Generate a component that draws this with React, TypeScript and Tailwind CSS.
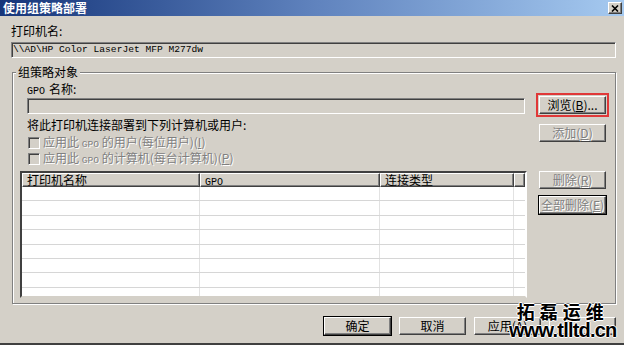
import clsx from 'clsx';
import type { ReactNode } from 'react';

const cjk = "font-['Noto_Sans_CJK_SC',sans-serif]";
const mono = "font-['Liberation_Mono',monospace]";

const raised =
  'border border-t-white border-l-white border-r-[#404040] border-b-[#404040] shadow-[inset_-1px_-1px_0_#808080]';
const sunken =
  'border border-t-[#808080] border-l-[#808080] border-r-white border-b-white shadow-[inset_1px_1px_0_#404040]';
const grayText = 'text-[#808080] [text-shadow:1px_1px_0_#fff]';

function Btn({
  children,
  disabled,
  strong,
  className,
}: {
  children?: ReactNode;
  disabled?: boolean;
  strong?: boolean;
  className?: string;
}) {
  return (
    <div
      className={clsx(
        'flex h-[18px] w-[67px] shrink-0 items-center justify-center bg-[#d4d0c8] text-[12px] leading-[14px]',
        raised,
        disabled ? grayText : 'text-black',
        strong && 'outline outline-1 outline-black',
        className,
      )}
    >
      {children}
    </div>
  );
}

function Check({ children }: { children: ReactNode }) {
  return (
    <div className={clsx('ml-[8px] flex h-[14px] items-center gap-[3px] text-[12px] leading-[14px]', grayText)}>
      <div className={clsx('h-[12px] w-[12px] shrink-0 bg-[#d4d0c8]', sunken)} />
      <span className="block">{children}</span>
    </div>
  );
}

const cols = ['w-[178px]', 'w-[180px]', 'w-[134px]', 'flex-1'];

export default function App() {
  const headers = ['打印机名称', 'GPO', '连接类型', ''];
  return (
    <div
      className={clsx(
        'relative flex h-[345px] w-[624px] flex-col overflow-hidden border-b-2 border-b-[#404040] bg-[#d4d0c8] text-black',
        cjk,
      )}
    >
      {/* title bar */}
      <div className="flex h-[16px] shrink-0 items-center justify-between bg-gradient-to-r from-[#16357a] via-[#5f82bd] to-[#a6caf0] pl-[3px] pr-[2px]">
        <span className="text-[12px] font-bold leading-[14px] text-white">使用组策略部署</span>
        <div className={clsx('flex h-[12px] w-[14px] items-center justify-center bg-[#d4d0c8]', raised)}>
          <svg width="8" height="7" viewBox="0 0 8 7">
            <path d="M1 0.5 L7 6.5 M7 0.5 L1 6.5" stroke="#000" strokeWidth="1.6" />
          </svg>
        </div>
      </div>

      <div className="flex flex-col pl-[11px] pr-[8px] pt-[8px]">
        <div className="text-[12px] leading-[14px]">打印机名:</div>
        <div className={clsx('mt-[4px] flex h-[16px] items-center pl-[1px]', sunken, mono)}>
          <span className="text-[9.6px] leading-[12px]">{'\\\\AD\\HP Color LaserJet MFP M277dw'}</span>
        </div>

        <fieldset className="ml-[1px] mt-[7px] border border-[#808080] pb-[5px] pl-[7px] pr-[9px] shadow-[inset_1px_1px_0_#fff,1px_1px_0_#fff]">
          <legend className="ml-[-4px] bg-[#d4d0c8] px-[2px] text-[12px] leading-[14px]">组策略对象</legend>
          <div className="flex gap-[12px]">
            {/* left column */}
            <div className="flex flex-1 flex-col pt-[3px]">
              <div className="ml-[7px] h-[14px] text-[12px] leading-[14px]">
                <span className={clsx(mono, 'mr-[4px] text-[10px]')}>GPO</span>名称:
              </div>
              <div className={clsx('ml-[7px] mr-[2px] mt-[2px] h-[16px]', sunken)} />
              <div className="ml-[7px] mt-[4px] text-[12px] leading-[14px]">将此打印机连接部署到下列计算机或用户:</div>
              <div className="mt-[4px]">
                <Check>
                  应用此 <span className={clsx(mono, 'text-[9.6px]')}>GPO</span> 的用户(每位用户)(<u>I</u>)
                </Check>
              </div>
              <div className="mt-[2px]">
                <Check>
                  应用此 <span className={clsx(mono, 'text-[9.6px]')}>GPO</span> 的计算机(每台计算机)(<u>P</u>)
                </Check>
              </div>

              {/* list view */}
              <div className="mt-[5px] flex h-[127px] flex-col overflow-hidden border-2 border-t-[#404040] border-l-[#404040] border-r-white border-b-[#d4d0c8] bg-white">
                <div className="flex h-[14px] shrink-0 bg-[#d4d0c8]">
                  {headers.map((h, i) => (
                    <div key={i} className={clsx(cols[i], 'h-full pl-[4px] text-[12px] leading-[12px]', raised)}>
                      {h === 'GPO' ? <span className={clsx(mono, 'text-[10px]')}>GPO</span> : h}
                    </div>
                  ))}
                </div>
                {Array.from({ length: 8 }).map((_, r) => (
                  <div key={r} className="flex h-[14.4px] shrink-0 border-b border-[#d6d6d6]">
                    {cols.map((c, i) => (
                      <div key={i} className={clsx(c, 'h-full', i < 3 && 'border-r border-[#e2e2e2]')} />
                    ))}
                  </div>
                ))}
              </div>
            </div>

            {/* right column */}
            <div className="flex w-[67px] flex-col pt-[17px]">
              <Btn className="outline-2 outline-offset-1 outline-[#e03838] [outline-style:solid]">
                浏览(<u>B</u>)...
              </Btn>
              <Btn disabled className="mt-[10px]">
                添加(<u>D</u>)
              </Btn>
              <Btn disabled className="mt-[29px]">
                删除(<u>R</u>)
              </Btn>
              <Btn disabled strong className="mt-[7px]">
                全部删除(<u>E</u>)
              </Btn>
            </div>
          </div>
        </fieldset>

        <div className="mt-[13px] flex justify-end gap-[8px] pl-[313px]">
          <Btn strong>确定</Btn>
          <Btn>取消</Btn>
          <Btn>
            应用(<u>A</u>)
          </Btn>
          <Btn />
        </div>
      </div>

      {/* watermark */}
      <div className="absolute left-[509px] top-[302px] flex flex-col items-center leading-none text-black [text-shadow:1px_0_0_#fff,-1px_0_0_#fff,0_1px_0_#fff,0_-1px_0_#fff]">
        <span className={clsx(cjk, 'text-[18px] font-bold tracking-[5px]')}>拓磊运维</span>
        <span className="font-['Liberation_Sans',sans-serif] text-[20px] font-bold tracking-[-0.8px]">www.tlltd.cn</span>
      </div>
    </div>
  );
}
